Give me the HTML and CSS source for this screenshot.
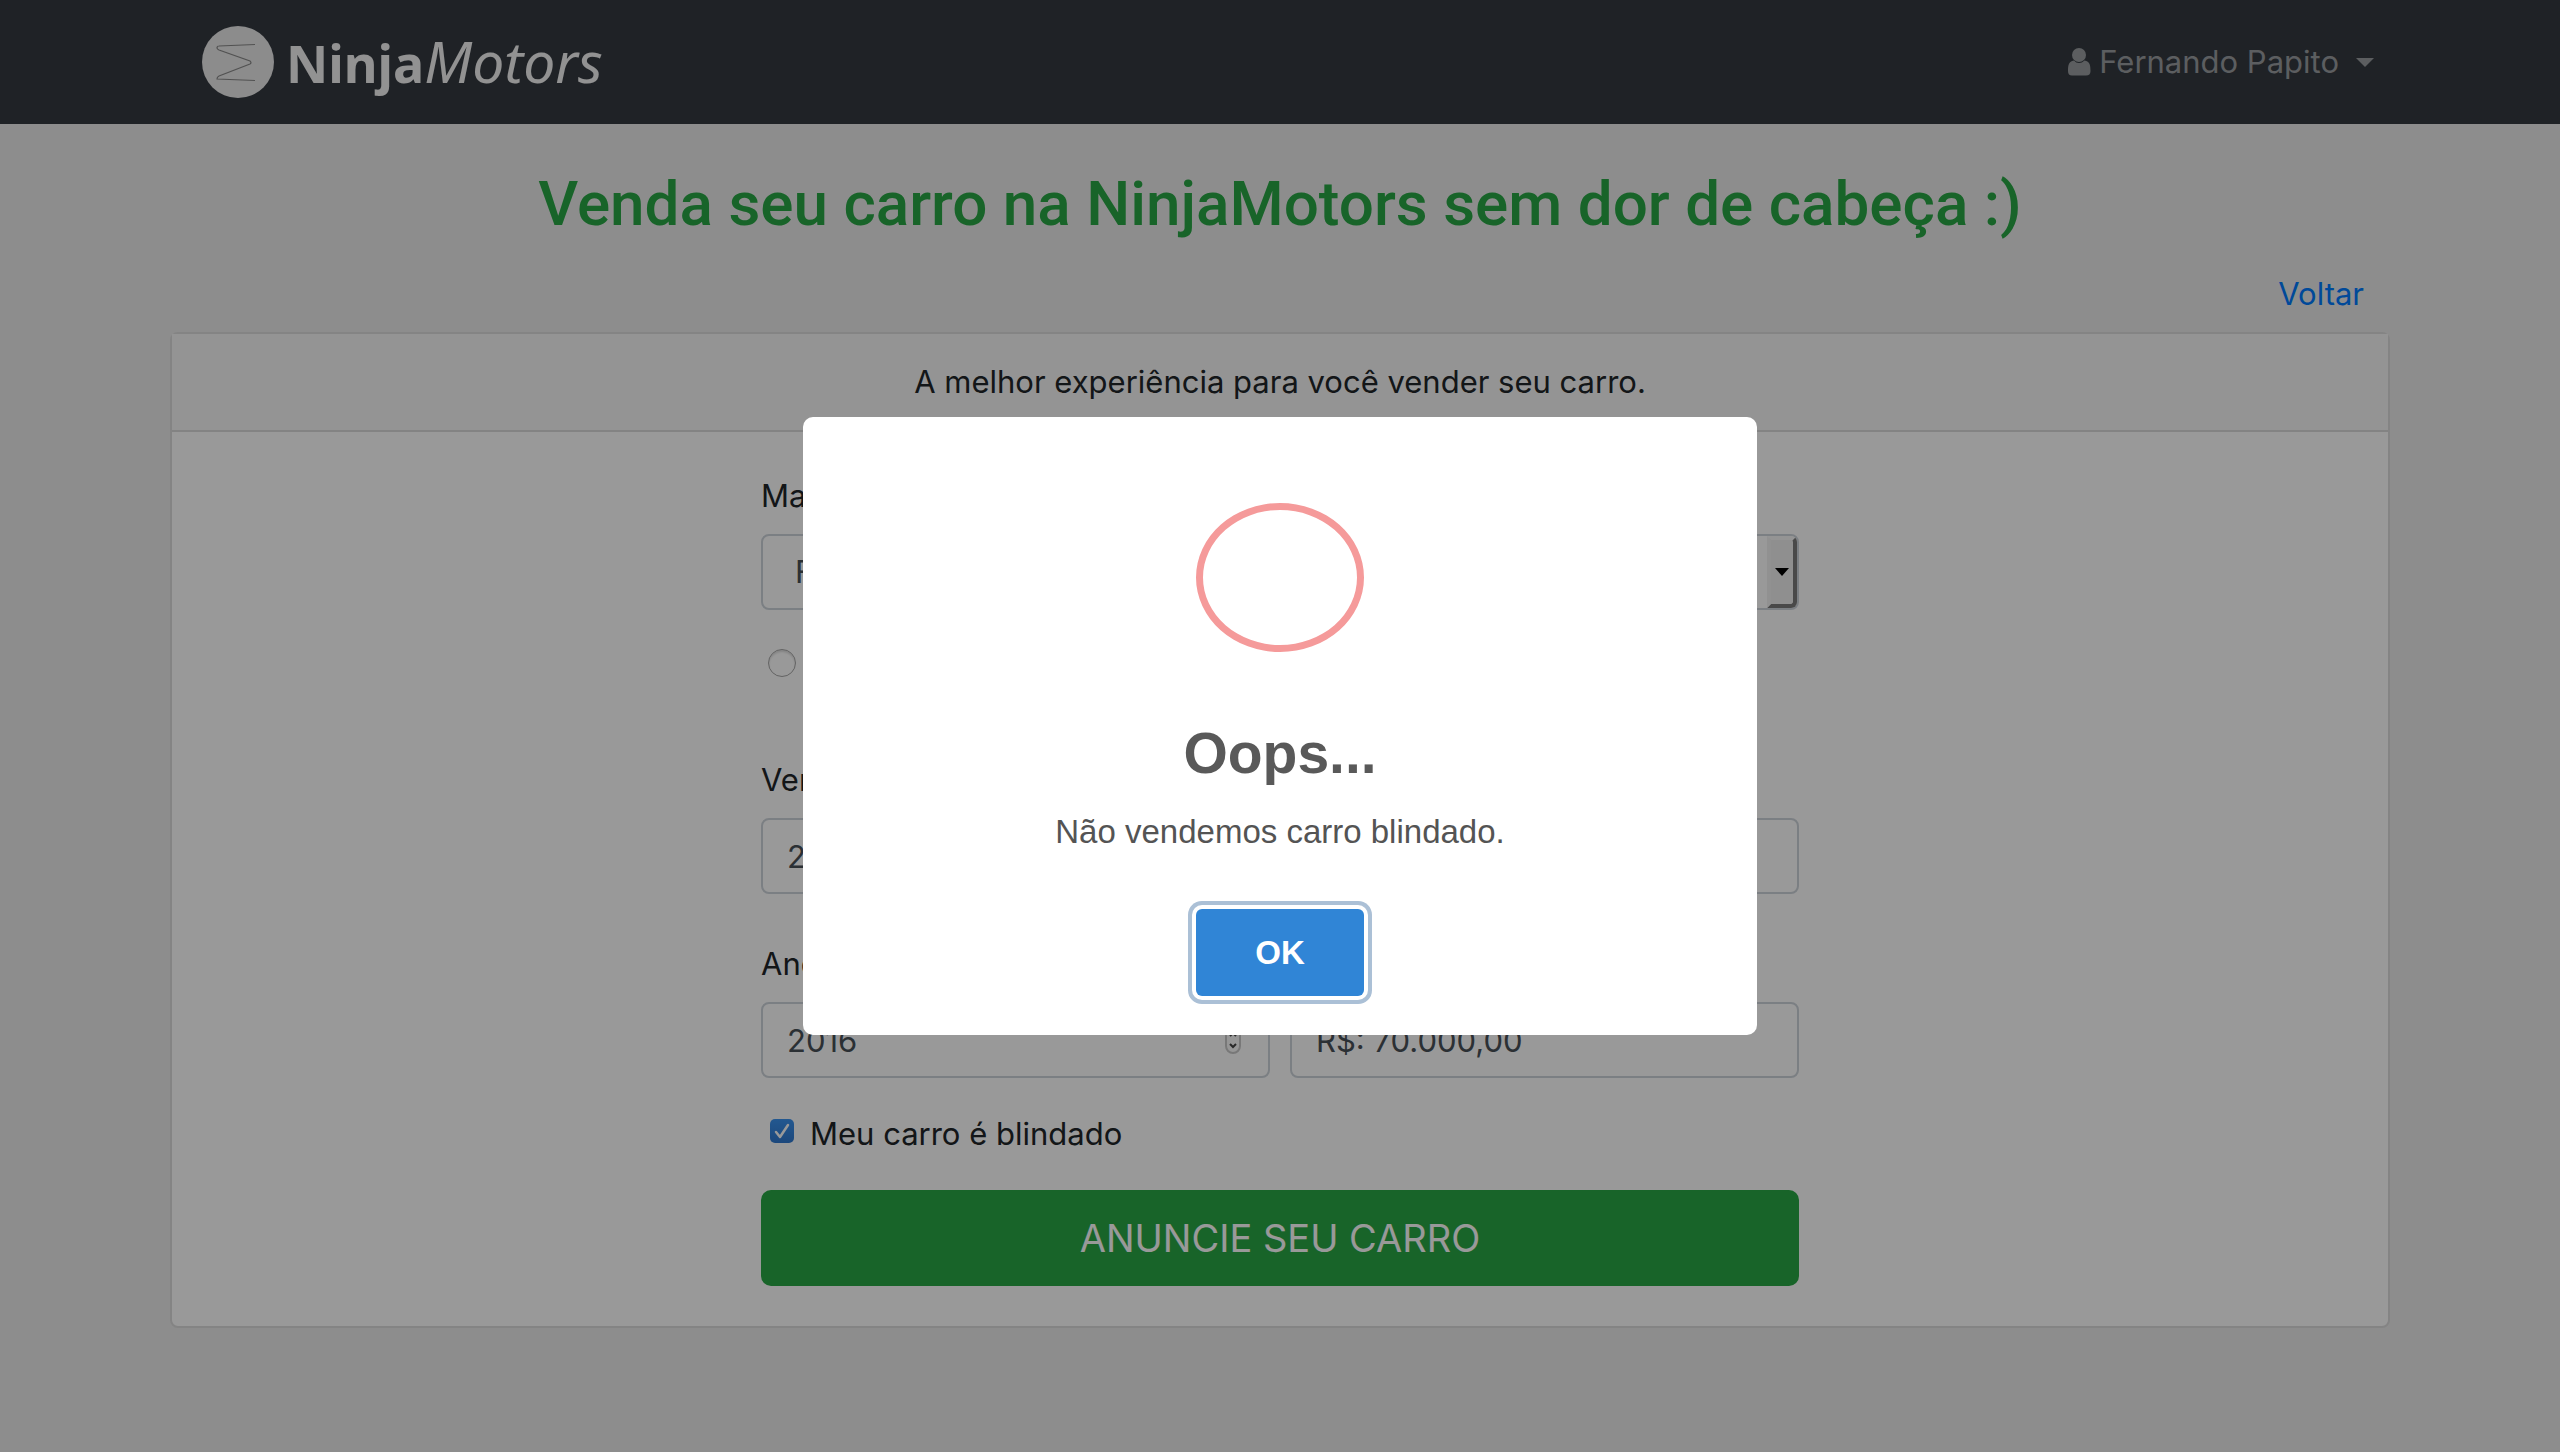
FILE: index.html
```html
<!DOCTYPE html>
<html lang="pt-BR">
<head>
<meta charset="utf-8">
<title>NinjaMotors</title>
<link rel="stylesheet" href="styles.css">
</head>
<body>
<header class="navbar">
  <a class="brand" href="#">
    <svg class="brand-mark" viewBox="0 0 72 72" aria-hidden="true">
      <circle cx="36" cy="36" r="36" fill="#e9e9e9"/>
      <path d="M53 18.500 L17 20 Q15 20 15 22 Q15 23 17 24 L48 35 Q50 37 48 38 L17 50 Q15 51 15 53 L53 54.500" fill="none" stroke="#888" stroke-width="1.200"/>
    </svg>
    <span class="brand-name"><b>Ninja</b><i>Motors</i></span>
  </a>
  <button class="user-menu" type="button">
    <svg class="user-icon" viewBox="0 0 24 28" aria-hidden="true">
      <path d="M7 12.500 C1.500 13 1 18 1 23 Q1 27.500 5 27.500 H19 Q23.500 27.500 23.500 23 C23.500 18 23 13 17.500 12.500 Q15 15 12 15 Q9 15 7 12.500Z"/>
      <circle cx="12" cy="7" r="7"/>
    </svg>
    <span>Fernando Papito</span>
    <span class="caret"></span>
  </button>
</header>

<main class="page">
  <h1 class="title">Venda seu carro na NinjaMotors sem dor de cabeça :)</h1>
  <nav class="back"><a href="#">Voltar</a></nav>
  <section class="card">
    <div class="card-header">A melhor experiência para você vender seu carro.</div>
    <form class="form">
      <div class="field">
        <label for="marca">Marca</label>
        <div class="select-wrap">
          <select class="control select" id="marca"><option>Ford</option></select>
          <span class="select-button"><span></span></span>
        </div>
      </div>
      <div class="radio-row"><input class="radio" type="radio" id="modelo" name="modelo"><label for="modelo">Fiesta</label></div>
      <div class="field">
        <label for="versao">Versão</label>
        <input class="control" id="versao" type="text" value="2.0">
      </div>
      <div class="columns">
        <div class="field">
          <label for="ano">Ano</label>
          <div class="number-wrap">
            <input class="control" id="ano" type="number" value="2016">
            <svg class="stepper" viewBox="0 0 16 40" aria-hidden="true">
              <rect x="1" y="1" width="14" height="37" rx="7" fill="#fafafa" stroke="#c8c8c8" stroke-width="2"/>
              <path d="M5 21 L8 18 L11 21 M5 29 L8 32 L11 29" fill="none" stroke="#444" stroke-width="2"/>
            </svg>
          </div>
        </div>
        <div class="field">
          <label for="preco">Preço</label>
          <input class="control" id="preco" type="text" value="R$: 70.000,00">
        </div>
      </div>
      <div class="check-row">
        <span class="check-wrap">
          <input class="check" type="checkbox" id="blindado" checked>
          <svg viewBox="0 0 24 24" aria-hidden="true"><path d="M6 13 L10 18 L18 6" fill="none" stroke="#fff" stroke-width="2.500" stroke-linecap="round" stroke-linejoin="round"/></svg>
        </span>
        <label for="blindado">Meu carro é blindado</label>
      </div>
      <button class="submit" type="button">ANUNCIE SEU CARRO</button>
    </form>
  </section>
</main>

<div class="overlay">
  <div class="modal" role="dialog" aria-modal="true" aria-labelledby="modal-title">
    <div class="modal-icon"></div>
    <h2 class="modal-title" id="modal-title">Oops...</h2>
    <p class="modal-text">Não vendemos carro blindado.</p>
    <button class="confirm" type="button">OK</button>
  </div>
</div>
</body>
</html>
```
FILE: styles.css
```css
* { box-sizing: border-box; }

body {
  margin: 0;
  background: #ebebeb;
  color: #212529;
  font: 31px/48px Inter, "Liberation Sans", sans-serif;
}

button, input, select { font: inherit; }

.navbar {
  display: flex;
  align-items: center;
  justify-content: space-between;
  height: 124px;
  padding: 0 calc(50% - 1094px) 0 calc(50% - 1078px);
  background: #343a40;
}

.brand {
  display: flex;
  align-items: center;
  gap: 12px;
  color: #f3f3f3;
  text-decoration: none;
}

.brand-mark { width: 72px; height: 72px; }

.brand-name {
  font: 57px/64px "Noto Sans", sans-serif;
}

.brand-name b { font-size: 52px; }

.user-menu {
  display: flex;
  align-items: center;
  padding: 0;
  border: 0;
  background: none;
  color: #9a9da0;
}

.user-icon {
  width: 24px;
  height: 28px;
  margin-right: 8px;
  fill: currentColor;
}

.caret {
  margin-left: 17px;
  border: 9px solid transparent;
  border-top-color: currentColor;
  border-bottom: 0;
}

.page {
  width: 88%;
  max-width: 2220px;
  margin: 0 auto;
  padding: 42px 0;
}

.title {
  margin: 0 0 28px;
  color: #28a745;
  font-family: Roboto, sans-serif;
  font-size: 62px;
  font-weight: 500;
  line-height: 76px;
  text-align: center;
}

.back {
  margin-bottom: 14px;
  padding-right: 26px;
  text-align: right;
}

.back a { color: #007bff; text-decoration: none; }

.card {
  border: 2px solid #dcdcdc;
  border-radius: 8px;
  background: #fff;
}

.card-header {
  padding: 24px;
  border-bottom: 2px solid #dadada;
  background: #f7f7f7;
  text-align: center;
}

.form {
  width: 90%;
  max-width: 1038px;
  margin: 0 auto;
  padding: 40px 0;
}

.field { display: grid; gap: 14px; }

.control {
  width: 100%;
  height: 76px;
  padding: 0 24px;
  border: 2px solid #ced4da;
  border-radius: 8px;
  background: #fff;
  color: #495057;
}

.select-wrap, .number-wrap, .check-wrap { position: relative; display: grid; }

.select { padding-left: 32px; appearance: none; }

.select-button {
  position: absolute;
  top: 2px;
  right: 2px;
  bottom: 2px;
  display: grid;
  place-items: center;
  width: 30px;
  border: 4px solid #f5f5f5;
  border-color: #f7f7f7 #7b7b7b #7b7b7b #f2f2f2;
  border-radius: 0 6px 6px 0;
  background: #efefef;
}

.select-button span {
  border: 7px solid transparent;
  border-top: 8px solid #000;
  border-bottom: 0;
}

.radio-row {
  display: flex;
  align-items: center;
  gap: 16px;
  margin: 29px 0 69px;
  padding-left: 7px;
}

.radio {
  width: 28px;
  height: 28px;
  margin: 0;
  border: 1px solid #a5a5a5;
  border-radius: 50%;
  background: #fff;
  box-shadow: inset 0 2px 2px #ddd;
  appearance: none;
}

.columns {
  display: grid;
  grid-template-columns: 1fr 1fr;
  gap: 20px;
  margin-top: 46px;
}

input[type="number"] { appearance: textfield; }

.stepper {
  position: absolute;
  right: 29px;
  bottom: 23px;
  width: 16px;
  height: 40px;
}

.check-row {
  display: flex;
  gap: 16px;
  margin: 32px 0;
  padding-left: 9px;
}

.check-wrap { margin-top: 9px; height: 24px; width: 24px; }

.check {
  width: 24px;
  height: 24px;
  margin: 0;
  border-radius: 5px;
  background: linear-gradient(#3b93f0, #2f78cf);
  appearance: none;
}

.check-wrap svg { position: absolute; inset: 0; pointer-events: none; }

.submit {
  display: block;
  width: 100%;
  height: 96px;
  border: 0;
  border-radius: 10px;
  background: #28a745;
  color: #fff;
  font-size: 38px;
}

.overlay {
  position: fixed;
  inset: 0;
  display: grid;
  place-items: center;
  background: rgba(0, 0, 0, .4);
}

.modal {
  display: flex;
  flex-direction: column;
  align-items: center;
  width: 90%;
  max-width: 954px;
  padding: 86px 40px 39px;
  border-radius: 10px;
  background: #fff;
  font-family: "Liberation Sans", Arial, sans-serif;
}

.modal-icon {
  width: 168px;
  height: 149px;
  border: 7px solid #f59a9a;
  border-radius: 50%;
}

.modal-title {
  margin: 65px 0 19px;
  color: #595959;
  font-size: 57px;
  line-height: 72px;
}

.modal-text { margin: 0 0 53px; color: #545454; font-size: 33px; }

.confirm {
  width: 168px;
  height: 87px;
  border: 0;
  border-radius: 6px;
  background: #3085d6;
  box-shadow: 0 0 0 4px #fff, 0 0 0 8px #abc0d6;
  color: #fff;
  font-size: 33px;
  font-weight: 700;
}
```
